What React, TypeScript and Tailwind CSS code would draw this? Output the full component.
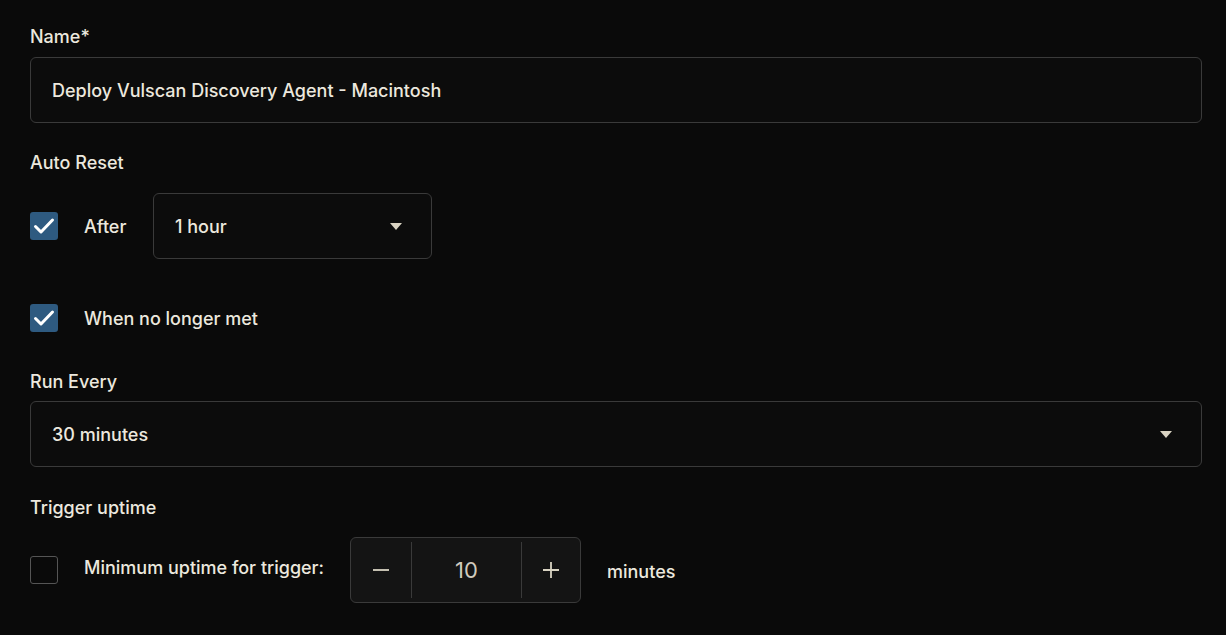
import React from "react";

function Check({ checked }: { checked: boolean }) {
  return checked ? (
    <div className="w-[28px] h-[28px] rounded-[3px] bg-[#2e5a80] flex items-center justify-center shrink-0">
      <svg width="24" height="24" viewBox="0 0 24 24" fill="none">
        <path d="M3.5 12.5l5.5 5.5L20.5 6" stroke="#ffffff" strokeWidth="3" strokeLinecap="round" strokeLinejoin="round" />
      </svg>
    </div>
  ) : (
    <div className="w-[28px] h-[28px] rounded-[3px] border border-[#555] shrink-0" />
  );
}

function Tri() {
  return (
    <svg width="14" height="9" viewBox="0 0 14 9">
      <path d="M1 1h12L7 8z" fill="#d9d3c2" />
    </svg>
  );
}

export default function App() {
  return (
    <div
      className="w-[1226px] h-[635px] bg-[#0a0a0a] text-[#ece8de] text-[18px] font-medium px-[30px] pt-[25px] overflow-hidden"
      style={{ fontFamily: "Inter, 'Noto Sans', sans-serif" }}
    >
      <div className="h-[24px] leading-[24px]">Name*</div>
      <div className="mt-[8px] h-[66px] w-[1172px] rounded-[6px] border border-[#3a3a3a] bg-[#0c0c0c] flex items-center px-[21px] pt-[1px]">
        Deploy Vulscan Discovery Agent - Macintosh
      </div>

      <div className="mt-[28px] h-[24px] leading-[24px]">Auto Reset</div>
      <div className="mt-[18px] flex items-center">
        <Check checked />
        <span className="ml-[26px] w-[69px]">After</span>
        <div className="h-[66px] w-[279px] rounded-[6px] border border-[#3a3a3a] bg-[#0c0c0c] flex items-center justify-between pl-[21px] pr-[28px]">
          <span>1 hour</span>
          <Tri />
        </div>
      </div>
      <div className="mt-[45px] flex items-center">
        <Check checked />
        <span className="ml-[26px]">When no longer met</span>
      </div>

      <div className="mt-[38px] h-[24px] leading-[24px]">Run Every</div>
      <div className="mt-[7px] h-[66px] w-[1172px] rounded-[6px] border border-[#3a3a3a] bg-[#0c0c0c] flex items-center justify-between pl-[21px] pr-[28px]">
        <span>30 minutes</span>
        <Tri />
      </div>

      <div className="mt-[29px] h-[24px] leading-[24px]">Trigger uptime</div>
      <div className="mt-[17px] flex items-center">
        <Check checked={false} />
        <span className="ml-[26px] w-[266px] mb-[6px]">Minimum uptime for trigger:</span>
        <div className="h-[66px] w-[231px] rounded-[6px] border border-[#3a3a3a] bg-[#141414] flex items-center">
          <div className="w-[60px] h-full flex items-center justify-center">
            <svg width="20" height="20" viewBox="0 0 20 20">
              <path d="M2 10h16" stroke="#d9d3c2" strokeWidth="1.8" />
            </svg>
          </div>
          <div className="w-px h-[56px] bg-[#3a3a3a]" />
          <div className="flex-1 h-full flex items-center justify-center text-[22px] font-normal text-[#cfcabd]">10</div>
          <div className="w-px h-[56px] bg-[#3a3a3a]" />
          <div className="w-[58px] h-full flex items-center justify-center">
            <svg width="20" height="20" viewBox="0 0 20 20">
              <path d="M2 10h16M10 2v16" stroke="#d9d3c2" strokeWidth="1.8" />
            </svg>
          </div>
        </div>
        <span className="ml-[26px] mt-[2px]">minutes</span>
      </div>
    </div>
  );
}
